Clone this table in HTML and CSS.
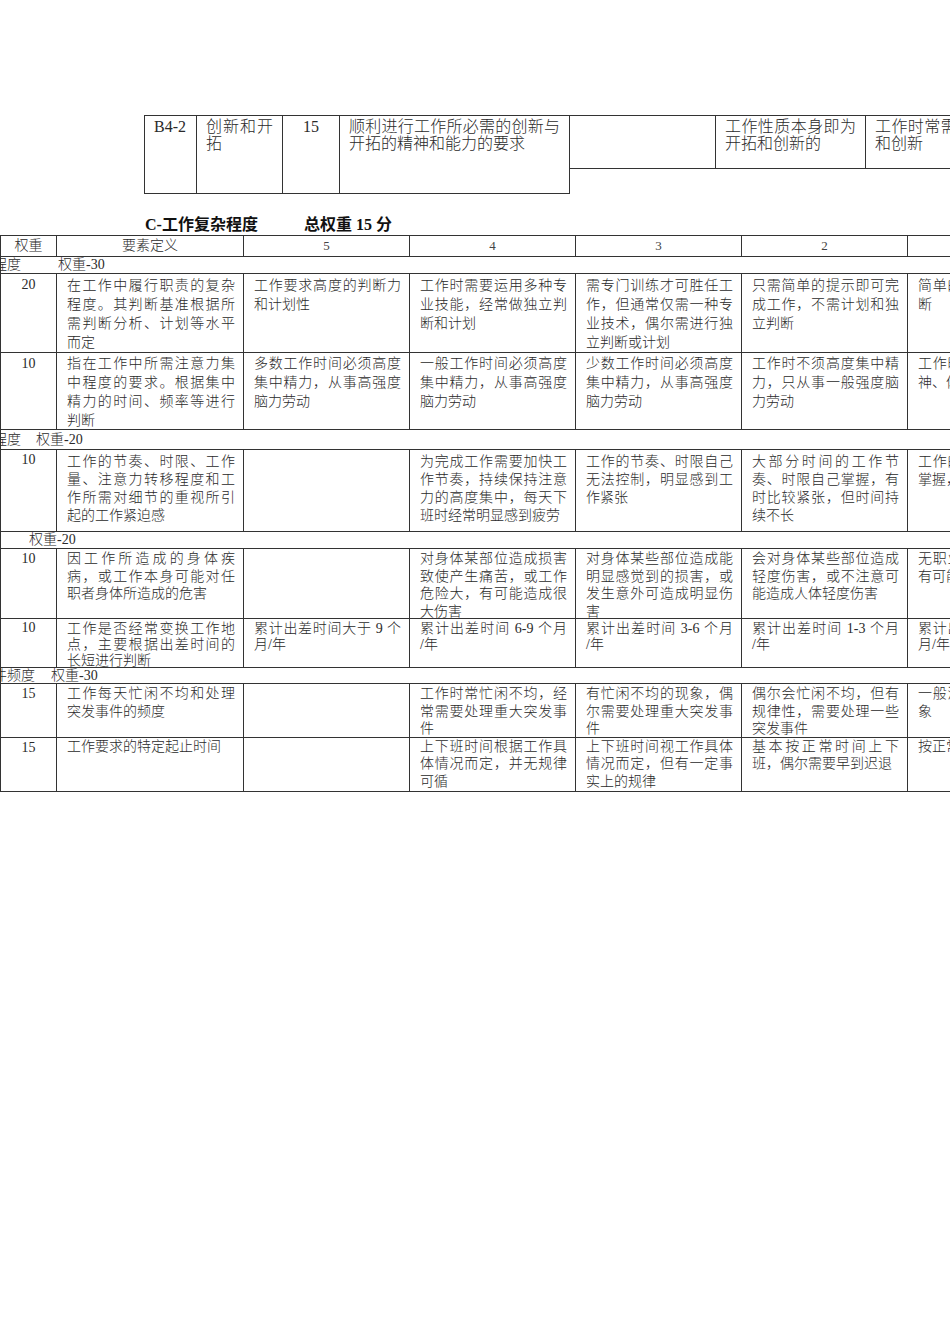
FILE: index.html
```html
<!DOCTYPE html>
<html lang="zh-CN">
<head>
<meta charset="utf-8">
<title>工作复杂程度</title>
<link rel="stylesheet" href="styles.css">
</head>
<body>
<div class="page">
  <table class="top">
    <colgroup>
      <col class="w52"><col class="w86"><col class="w57"><col class="w230"><col class="w146"><col class="w150"><col class="w150">
    </colgroup>
    <tr class="tr1">
      <td rowspan="2" class="code">B4-2</td>
      <td rowspan="2"><span class="j">创新和开</span><span>拓</span></td>
      <td rowspan="2" class="num">15</td>
      <td rowspan="2"><span class="j">顺利进行工作所必需的创新与</span><span>开拓的精神和能力的要求</span></td>
      <td class="light"></td>
      <td class="light"><span class="j">工作性质本身即为</span><span>开拓和创新的</span></td>
      <td><span class="j">工作时常需要开拓</span><span>和创新</span></td>
    </tr>
    <tr class="tr2">
      <td colspan="3" class="blank"></td>
    </tr>
  </table>

  <h2 class="title"><span>C-工作复杂程度</span><span class="t2">总权重 15 分</span></h2>

  <table class="main">
    <colgroup>
      <col class="m56"><col class="m187"><col class="m166"><col class="m166"><col class="m166"><col class="m166"><col class="m166">
    </colgroup>
    <tr class="head">
      <td>权重</td><td>要素定义</td><td class="dg">5</td><td class="dg">4</td><td class="dg">3</td><td class="dg">2</td><td class="dg">1</td>
    </tr>

    <tr class="sec s1"><td colspan="7"><span class="sn">工作复杂程度</span><span class="sw">权重-30</span></td></tr>
    <tr class="r r1">
      <td class="num">20</td>
      <td><span class="j">在工作中履行职责的复杂</span><span class="j">程度。其判断基准根据所</span><span class="j">需判断分析、计划等水平</span><span>而定</span></td>
      <td><span class="j">工作要求高度的判断力</span><span>和计划性</span></td>
      <td><span class="j">工作时需要运用多种专</span><span class="j">业技能，经常做独立判</span><span>断和计划</span></td>
      <td><span class="j">需专门训练才可胜任工</span><span class="j">作，但通常仅需一种专</span><span class="j">业技术，偶尔需进行独</span><span>立判断或计划</span></td>
      <td><span class="j">只需简单的提示即可完</span><span class="j">成工作，不需计划和独</span><span>立判断</span></td>
      <td><span class="j">简单的工作，不需要判</span><span>断</span></td>
    </tr>
    <tr class="r r2">
      <td class="num">10</td>
      <td><span class="j">指在工作中所需注意力集</span><span class="j">中程度的要求。根据集中</span><span class="j">精力的时间、频率等进行</span><span>判断</span></td>
      <td><span class="j">多数工作时间必须高度</span><span class="j">集中精力，从事高强度</span><span>脑力劳动</span></td>
      <td><span class="j">一般工作时间必须高度</span><span class="j">集中精力，从事高强度</span><span>脑力劳动</span></td>
      <td><span class="j">少数工作时间必须高度</span><span class="j">集中精力，从事高强度</span><span>脑力劳动</span></td>
      <td><span class="j">工作时不须高度集中精</span><span class="j">力，只从事一般强度脑</span><span>力劳动</span></td>
      <td><span class="j">工作时只需要一般的精</span><span>神、体力劳动</span></td>
    </tr>

    <tr class="sec s2"><td colspan="7"><span class="sn">工作紧张程度</span><span class="sw">权重-20</span></td></tr>
    <tr class="r r3">
      <td class="num">10</td>
      <td><span class="j">工作的节奏、时限、工作</span><span class="j">量、注意力转移程度和工</span><span class="j">作所需对细节的重视所引</span><span>起的工作紧迫感</span></td>
      <td></td>
      <td><span class="j">为完成工作需要加快工</span><span class="j">作节奏，持续保持注意</span><span class="j">力的高度集中，每天下</span><span>班时经常明显感到疲劳</span></td>
      <td><span class="j">工作的节奏、时限自己</span><span class="j">无法控制，明显感到工</span><span>作紧张</span></td>
      <td><span class="j">大部分时间的工作节</span><span class="j">奏、时限自己掌握，有</span><span class="j">时比较紧张，但时间持</span><span>续不长</span></td>
      <td><span class="j">工作的节奏、时限自己</span><span>掌握，没有紧迫感</span></td>
    </tr>

    <tr class="sec s3"><td colspan="7"><span class="sn">工作危害性</span><span class="sw">权重-20</span></td></tr>
    <tr class="r r4">
      <td class="num">10</td>
      <td><span class="j">因工作所造成的身体疾</span><span class="j">病，或工作本身可能对任</span><span>职者身体所造成的危害</span></td>
      <td></td>
      <td><span class="j">对身体某部位造成损害</span><span class="j">致使产生痛苦，或工作</span><span class="j">危险大，有可能造成很</span><span>大伤害</span></td>
      <td><span class="j">对身体某些部位造成能</span><span class="j">明显感觉到的损害，或</span><span class="j">发生意外可造成明显伤</span><span>害</span></td>
      <td><span class="j">会对身体某些部位造成</span><span class="j">轻度伤害，或不注意可</span><span>能造成人体轻度伤害</span></td>
      <td><span class="j">无职业病，工作本身没</span><span>有可能造成危害</span></td>
    </tr>
    <tr class="r r5">
      <td class="num">10</td>
      <td><span class="j">工作是否经常变换工作地</span><span class="j">点，主要根据出差时间的</span><span>长短进行判断</span></td>
      <td><span class="j">累计出差时间大于 9 个</span><span>月/年</span></td>
      <td><span class="j">累计出差时间 6-9 个月</span><span>/年</span></td>
      <td><span class="j">累计出差时间 3-6 个月</span><span>/年</span></td>
      <td><span class="j">累计出差时间 1-3 个月</span><span>/年</span></td>
      <td><span class="j">累计出差时间少于 1 个</span><span>月/年</span></td>
    </tr>

    <tr class="sec s4"><td colspan="7"><span class="sn">突发事件频度</span><span class="sw">权重-30</span></td></tr>
    <tr class="r r6">
      <td class="num">15</td>
      <td><span class="j">工作每天忙闲不均和处理</span><span>突发事件的频度</span></td>
      <td></td>
      <td><span class="j">工作时常忙闲不均，经</span><span class="j">常需要处理重大突发事</span><span>件</span></td>
      <td><span class="j">有忙闲不均的现象，偶</span><span class="j">尔需要处理重大突发事</span><span>件</span></td>
      <td><span class="j">偶尔会忙闲不均，但有</span><span class="j">规律性，需要处理一些</span><span>突发事件</span></td>
      <td><span class="j">一般没有忙闲不均的现</span><span>象</span></td>
    </tr>
    <tr class="r r7">
      <td class="num">15</td>
      <td><span>工作要求的特定起止时间</span></td>
      <td></td>
      <td><span class="j">上下班时间根据工作具</span><span class="j">体情况而定，并无规律</span><span>可循</span></td>
      <td><span class="j">上下班时间视工作具体</span><span class="j">情况而定，但有一定事</span><span>实上的规律</span></td>
      <td><span class="j">基本按正常时间上下</span><span>班，偶尔需要早到迟退</span></td>
      <td><span>按正常时间上下班</span></td>
    </tr>
  </table>
</div>
</body>
</html>
```

FILE: styles.css
```css
html, body {
  margin: 0;
  padding: 0;
  background: #ffffff;
}
body {
  width: 950px;
  height: 1344px;
  overflow: hidden;
  font-family: "Liberation Serif", "Noto Sans CJK SC", serif;
  color: #2a2a2a;
}
.page {
  padding-top: 115px;
}

/* ---------- top table ---------- */
.top {
  margin-left: 144px;
  border-collapse: collapse;
  table-layout: fixed;
  width: 871px;
  font-size: 16px;
  line-height: 17px;
}
.w52 { width: 52px; }
.w86 { width: 86px; }
.w57 { width: 57px; }
.w230 { width: 230px; }
.w146 { width: 146px; }
.w150 { width: 150px; }
.top td {
  border: 1px solid #333;
  vertical-align: top;
  padding: 2px 9px 0 9px;
  font-weight: 300;
}
.top td span {
  display: block;
  white-space: nowrap;
}
.top .tr1 { height: 53px; }
.top .tr2 { height: 25px; }
.top td.blank {
  border-right: none;
  border-bottom: none;
}
.top td.code,
.top td.num {
  font-weight: 400;
}
.top td.num { text-align: center; }

/* ---------- title ---------- */
.title {
  margin: 21px 0 0 0;
  padding-left: 145px;
  font-size: 16px;
  line-height: 20px;
  height: 20px;
  font-weight: 700;
  color: #111;
}
.title .t2 {
  margin-left: 46px;
}

/* ---------- main table ---------- */
.main {
  border-collapse: collapse;
  table-layout: fixed;
  width: 1073px;
  font-size: 14px;
}
.m56 { width: 56px; }
.m187 { width: 187px; }
.m166 { width: 166px; }
.main td {
  border: 1px solid #333;
  vertical-align: top;
  padding: 1px 8px 0 10px;
  font-weight: 300;
}
.main td span {
  display: block;
  white-space: nowrap;
}
.main .r td span:last-child {
  margin-bottom: -8px;
}
.j {
  text-align: justify;
  text-align-last: justify;
}
.main .head td {
  height: 20px;
  line-height: 20px;
  text-align: center;
  padding: 0;
  vertical-align: middle;
}
.main .head td.dg { font-weight: 400; color: #444; font-size: 13px; }
.main td.num {
  text-align: center;
  padding: 1px 0 0 0;
  font-weight: 400;
}

.r1 { height: 79px; line-height: 19px; }
.r2 { height: 77px; line-height: 19px; }
.r3 { height: 82px; line-height: 18px; }
.r4 { height: 70px; line-height: 17.7px; }
.r5 { height: 49px; line-height: 16px; }
.r6 { height: 54px; line-height: 17.6px; }
.r7 { height: 54px; line-height: 17.4px; }
.r1 td { padding-top: 2px; }
.r3 td { padding-top: 3px; }
.r5 td { padding-top: 2px; }
.r7 td { padding-top: 0; }

/* section rows */
.main .sec td {
  padding: 0;
  white-space: nowrap;
  vertical-align: middle;
}
.sec .sn,
.sec .sw {
  display: inline-block !important;
}
.sec .sn {
  width: 120px;
  text-align: right;
}
.s1 td { height: 16px; line-height: 16px; }
.s2 td { height: 19px; line-height: 19px; }
.s3 td { height: 16px; line-height: 16px; }
.s4 td { height: 15px; line-height: 15px; }
.s1 .sn { margin-left: -100px; }
.s1 .sw { margin-left: 37px; }
.s2 .sn { margin-left: -100px; }
.s2 .sw { margin-left: 15px; }
.s3 .sn { margin-left: -122px; }
.s3 .sw { margin-left: 30px; }
.s4 .sn { margin-left: -86px; }
.s4 .sw { margin-left: 16px; }
```
